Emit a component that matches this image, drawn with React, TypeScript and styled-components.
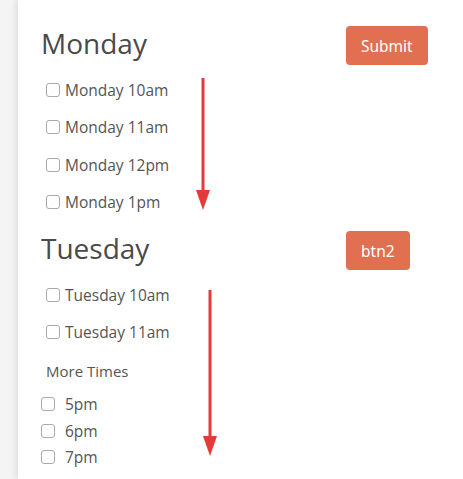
import React, { FC } from "react";
import styled, { createGlobalStyle } from "styled-components";

const GlobalStyle = createGlobalStyle`
  html, body {
    margin: 0;
    padding: 0;
    background: #f4f4f4;
    font-family: "Open Sans", "Lato", sans-serif;
    color: #555;
  }
`;

const Page = styled.div`
  position: relative;
  margin-left: 18px;
  min-height: 479px;
  background: #fff;
  box-shadow: -3px 0 6px rgba(0, 0, 0, 0.08);
  padding: 26px 0 0 23px;
  box-sizing: border-box;
`;

const DayHeader = styled.div`
  display: flex;
  align-items: center;
  height: 39px;
`;

const DayTitle = styled.h2`
  width: 305px;
  margin: 0 0 5px;
  font-size: 28px;
  font-weight: 400;
  color: #4a4a4a;
  line-height: 36px;
`;

const ActionButton = styled.button`
  height: 39px;
  padding: 0 15px;
  border: none;
  border-radius: 4px;
  background: #e07050;
  color: #fff;
  font-family: "Noto Sans", sans-serif;
  font-size: 15.5px;
  cursor: pointer;
`;

const SlotList = styled.div`
  display: flex;
  flex-direction: column;
  padding: 6px 0 10px 5px;
`;

const SlotRow = styled.label<{ $compact?: boolean }>`
  display: flex;
  align-items: center;
  gap: ${(p) => (p.$compact ? "10px" : "5px")};
  height: ${(p) => (p.$compact ? "26.5px" : "37.5px")};
  font-size: 15.5px;
  color: #555;
`;

const Box = styled.span`
  width: 14px;
  height: 14px;
  border: 1px solid #aaa;
  border-radius: 3px;
  background: #fff;
  box-sizing: border-box;
`;

const MoreTitle = styled.div`
  font-size: 15px;
  color: #555;
  padding: 0 0 10px 5px;
`;

const MoreList = styled.div`
  display: flex;
  flex-direction: column;
`;

const Arrow = styled.svg<{ $top: number; $left: number }>`
  position: absolute;
  top: ${(p) => p.$top}px;
  left: ${(p) => p.$left}px;
`;

const DownArrow: FC<{ top: number; left: number; length: number }> = ({
  top,
  left,
  length,
}) => (
  <Arrow $top={top} $left={left} width="16" height={length} viewBox={`0 0 16 ${length}`}>
    <line x1="8" y1="0" x2="8" y2={length - 14} stroke="#e53a3a" strokeWidth="3" />
    <polygon points={`1,${length - 20} 15,${length - 20} 8,${length}`} fill="#e53a3a" />
  </Arrow>
);

const Slot: FC<{ label: string; compact?: boolean }> = ({ label, compact }) => (
  <SlotRow $compact={compact}>
    <Box />
    {label}
  </SlotRow>
);

const App: FC = () => {
  return (
    <>
      <GlobalStyle />
      <Page>
        <DayHeader>
          <DayTitle>Monday</DayTitle>
          <ActionButton>Submit</ActionButton>
        </DayHeader>
        <SlotList>
          {["Monday 10am", "Monday 11am", "Monday 12pm", "Monday 1pm"].map((t) => (
            <Slot key={t} label={t} />
          ))}
        </SlotList>
        <DayHeader>
          <DayTitle>Tuesday</DayTitle>
          <ActionButton>btn2</ActionButton>
        </DayHeader>
        <SlotList>
          {["Tuesday 10am", "Tuesday 11am"].map((t) => (
            <Slot key={t} label={t} />
          ))}
        </SlotList>
        <MoreTitle>More Times</MoreTitle>
        <MoreList>
          {["5pm", "6pm", "7pm"].map((t) => (
            <Slot key={t} label={t} compact />
          ))}
        </MoreList>
        <DownArrow top={78} left={177} length={132} />
        <DownArrow top={290} left={184} length={166} />
      </Page>
    </>
  );
};

export default App;
